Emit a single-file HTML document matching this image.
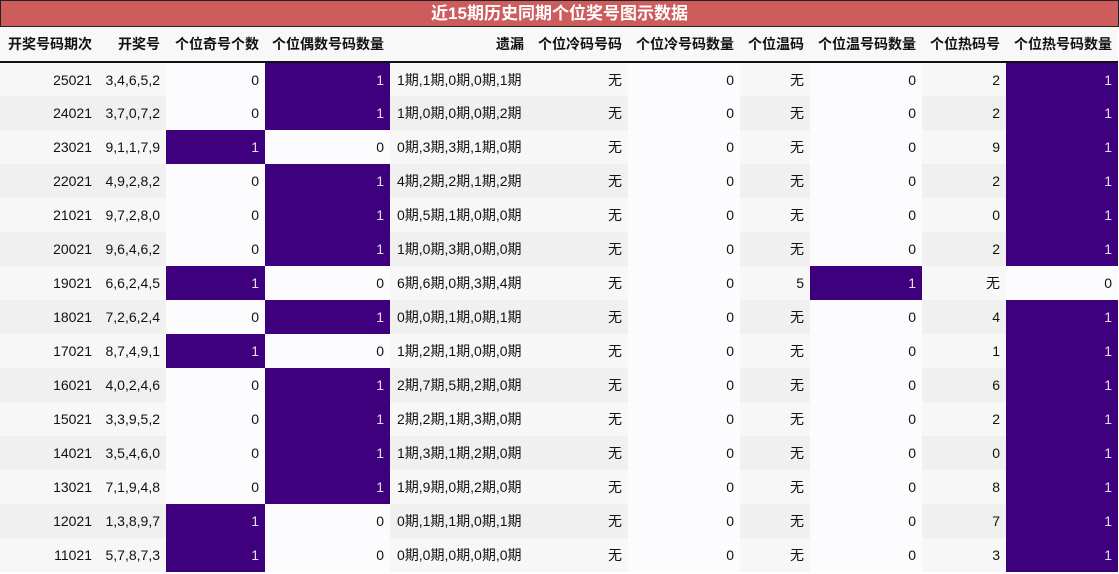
<!DOCTYPE html>
<html><head><meta charset="utf-8"><style>
*{margin:0;padding:0;box-sizing:border-box}
body{width:1119px;height:574px;background:#fff;font-family:"Liberation Sans","Noto Sans CJK SC",sans-serif;overflow:hidden}
.t{height:27px;background:#cd5c5c;border:1px solid #222;color:#fff;font-weight:bold;font-size:17px;text-align:center;line-height:25px;width:1119px}
table{border-collapse:collapse;table-layout:fixed;width:1118px;font-size:14px;color:#111}
th{height:35px;background:#f8f8f8;font-weight:bold;text-align:right;padding:0 6px 0 0;border-bottom:2px solid #111;white-space:nowrap}
td{height:34px;text-align:right;padding:0 6px 0 0;white-space:nowrap}
tr:nth-child(odd) td{background:#f7f7f7}
tr:nth-child(even) td{background:#f0f0f0}
tr td.w{background:#fcfcfe}
tr td.p{background:#3f007d;color:#e4dcf0}
td.l{text-align:left;padding-left:7px}
</style></head><body>
<div class="t">近15期历史同期个位奖号图示数据</div>
<table>
<colgroup><col style="width:98px"><col style="width:68px"><col style="width:99px"><col style="width:125px"><col style="width:140px"><col style="width:98px"><col style="width:112px"><col style="width:70px"><col style="width:112px"><col style="width:84px"><col style="width:112px"></colgroup>
<thead><tr><th>开奖号码期次</th><th>开奖号</th><th>个位奇号个数</th><th>个位偶数号码数量</th><th>遗漏</th><th>个位冷码号码</th><th>个位冷号码数量</th><th>个位温码</th><th>个位温号码数量</th><th>个位热码号</th><th>个位热号码数量</th></tr></thead>
<tbody>
<tr><td>25021</td><td>3,4,6,5,2</td><td class="w">0</td><td class="p">1</td><td class="l">1期,1期,0期,0期,1期</td><td>无</td><td class="w">0</td><td>无</td><td class="w">0</td><td>2</td><td class="p">1</td></tr>
<tr><td>24021</td><td>3,7,0,7,2</td><td class="w">0</td><td class="p">1</td><td class="l">1期,0期,0期,0期,2期</td><td>无</td><td class="w">0</td><td>无</td><td class="w">0</td><td>2</td><td class="p">1</td></tr>
<tr><td>23021</td><td>9,1,1,7,9</td><td class="p">1</td><td class="w">0</td><td class="l">0期,3期,3期,1期,0期</td><td>无</td><td class="w">0</td><td>无</td><td class="w">0</td><td>9</td><td class="p">1</td></tr>
<tr><td>22021</td><td>4,9,2,8,2</td><td class="w">0</td><td class="p">1</td><td class="l">4期,2期,2期,1期,2期</td><td>无</td><td class="w">0</td><td>无</td><td class="w">0</td><td>2</td><td class="p">1</td></tr>
<tr><td>21021</td><td>9,7,2,8,0</td><td class="w">0</td><td class="p">1</td><td class="l">0期,5期,1期,0期,0期</td><td>无</td><td class="w">0</td><td>无</td><td class="w">0</td><td>0</td><td class="p">1</td></tr>
<tr><td>20021</td><td>9,6,4,6,2</td><td class="w">0</td><td class="p">1</td><td class="l">1期,0期,3期,0期,0期</td><td>无</td><td class="w">0</td><td>无</td><td class="w">0</td><td>2</td><td class="p">1</td></tr>
<tr><td>19021</td><td>6,6,2,4,5</td><td class="p">1</td><td class="w">0</td><td class="l">6期,6期,0期,3期,4期</td><td>无</td><td class="w">0</td><td>5</td><td class="p">1</td><td>无</td><td class="w">0</td></tr>
<tr><td>18021</td><td>7,2,6,2,4</td><td class="w">0</td><td class="p">1</td><td class="l">0期,0期,1期,0期,1期</td><td>无</td><td class="w">0</td><td>无</td><td class="w">0</td><td>4</td><td class="p">1</td></tr>
<tr><td>17021</td><td>8,7,4,9,1</td><td class="p">1</td><td class="w">0</td><td class="l">1期,2期,1期,0期,0期</td><td>无</td><td class="w">0</td><td>无</td><td class="w">0</td><td>1</td><td class="p">1</td></tr>
<tr><td>16021</td><td>4,0,2,4,6</td><td class="w">0</td><td class="p">1</td><td class="l">2期,7期,5期,2期,0期</td><td>无</td><td class="w">0</td><td>无</td><td class="w">0</td><td>6</td><td class="p">1</td></tr>
<tr><td>15021</td><td>3,3,9,5,2</td><td class="w">0</td><td class="p">1</td><td class="l">2期,2期,1期,3期,0期</td><td>无</td><td class="w">0</td><td>无</td><td class="w">0</td><td>2</td><td class="p">1</td></tr>
<tr><td>14021</td><td>3,5,4,6,0</td><td class="w">0</td><td class="p">1</td><td class="l">1期,3期,1期,2期,0期</td><td>无</td><td class="w">0</td><td>无</td><td class="w">0</td><td>0</td><td class="p">1</td></tr>
<tr><td>13021</td><td>7,1,9,4,8</td><td class="w">0</td><td class="p">1</td><td class="l">1期,9期,0期,2期,0期</td><td>无</td><td class="w">0</td><td>无</td><td class="w">0</td><td>8</td><td class="p">1</td></tr>
<tr><td>12021</td><td>1,3,8,9,7</td><td class="p">1</td><td class="w">0</td><td class="l">0期,1期,1期,0期,1期</td><td>无</td><td class="w">0</td><td>无</td><td class="w">0</td><td>7</td><td class="p">1</td></tr>
<tr><td>11021</td><td>5,7,8,7,3</td><td class="p">1</td><td class="w">0</td><td class="l">0期,0期,0期,0期,0期</td><td>无</td><td class="w">0</td><td>无</td><td class="w">0</td><td>3</td><td class="p">1</td></tr>
</tbody></table>
</body></html>
